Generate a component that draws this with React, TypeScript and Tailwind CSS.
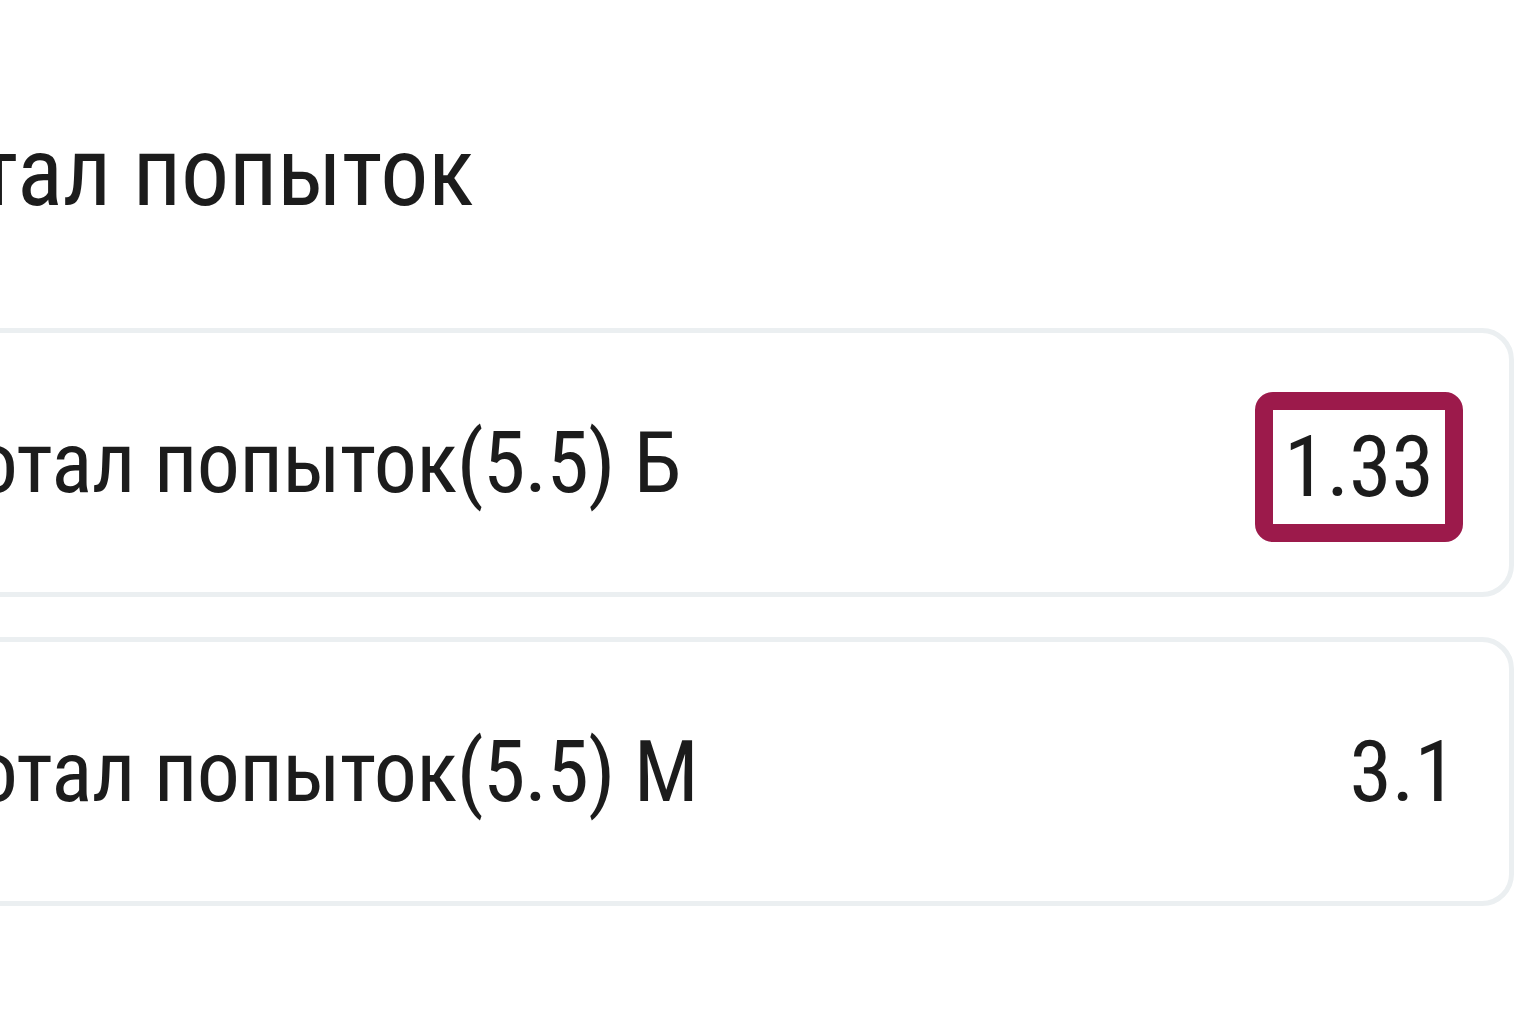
import React from 'react'

/* ── Строка рынка ─────────────────────────────────────────────── */

function MarketRow({ label, odd, active }: { label: string; odd: string; active?: boolean }) {
  return (
    <div className="flex items-center justify-between h-[269px] rounded-[32px] border-[5px] border-[#ebeff1] bg-white pl-[90px] pr-[46px]">
      <span className="text-[86px] leading-none font-stretch-[77%] tracking-[-0.8px] text-[#1c1c1c] whitespace-nowrap">{label}</span>
      {active ? (
        <span className="mt-[8px] flex items-center justify-center h-[150px] px-[11px] rounded-[18px] border-[18px] border-[#9c1a4b] text-[86px] leading-none font-stretch-[77%] text-[#1c1c1c]">
          {odd}
        </span>
      ) : (
        <span className="pr-[6px] text-[86px] leading-none font-stretch-[77%] text-[#1c1c1c]">{odd}</span>
      )}
    </div>
  )
}

export default function App() {
  return (
    <div className="w-[1536px] h-[1024px] overflow-hidden bg-white" style={{ fontFamily: 'Roboto, "Noto Sans", sans-serif' }}>
      <div className="-ml-[160px] mr-[22px] pt-[124px] flex flex-col">
        <h2 className="text-[96px] leading-none font-normal font-stretch-[79%] tracking-[-0.5px] text-[#1c1c1c] whitespace-nowrap pl-[46px]">Тотал попыток</h2>
        <div className="mt-[108px] flex flex-col gap-[40px]">
          <MarketRow label="Тотал попыток(5.5) Б" odd="1.33" active />
          <MarketRow label="Тотал попыток(5.5) М" odd="3.1" />
        </div>
      </div>
    </div>
  )
}
